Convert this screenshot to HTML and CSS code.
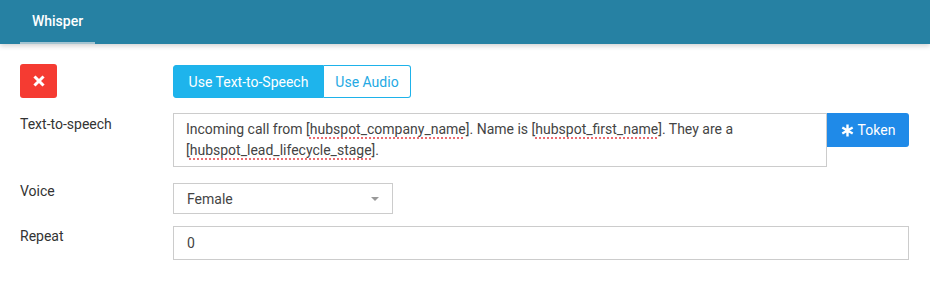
FILE: index.html
```html
<!DOCTYPE html>
<html lang="en">
<head>
    <meta charset="UTF-8">
    <title>Whisper</title>
    <link rel="stylesheet" href="styles.css">
</head>
<body>
    <div class="header">
        <div class="tab">Whisper</div>
    </div>

    <div class="content">
        <div class="row row-top">
            <div class="label">
                <button type="button" class="btn-remove" title="Remove">
                    <svg width="12" height="12" viewBox="0 0 12 12">
                        <path d="M2.5 2.5 L9.5 9.5 M9.5 2.5 L2.5 9.5" stroke="#fff" stroke-width="3" stroke-linecap="square"/>
                    </svg>
                </button>
            </div>
            <div class="btn-group">
                <button type="button" class="seg active">Use Text-to-Speech</button>
                <button type="button" class="seg">Use Audio</button>
            </div>
        </div>

        <div class="row row-tts">
            <div class="label">Text-to-speech</div>
            <div class="tts-wrap">
                <div class="textarea">Incoming call from [<span class="typo">hubspot_company_name</span>]. Name is [<span class="typo">hubspot_first_name</span>]. They are a<br>[<span class="typo">hubspot_lead_lifecycle_stage</span>].</div>
                <button type="button" class="btn-token">
                    <svg width="13" height="13" viewBox="0 0 12 12">
                        <path d="M6 0.5 V11.5 M1.2 3.2 L10.8 8.8 M10.8 3.2 L1.2 8.8" stroke="#fff" stroke-width="2.2"/>
                    </svg>
                    Token
                </button>
            </div>
        </div>

        <div class="row row-voice">
            <div class="label">Voice</div>
            <div class="select">
                <span>Female</span>
                <span class="caret"></span>
            </div>
        </div>

        <div class="row row-repeat">
            <div class="label">Repeat</div>
            <div class="input">0</div>
        </div>
    </div>
</body>
</html>
```

FILE: styles.css
```css
body {
    margin: 0;
    font-family: Roboto, "Liberation Sans", Arial, sans-serif;
    font-size: 14px;
    color: #333;
    background-color: #fff;
}
.header {
    background-color: #2681a3;
    height: 44px;
    padding-left: 20px;
    display: flex;
    box-shadow: 0 2px 5px rgba(0, 0, 0, 0.18);
}
.tab {
    color: #fff;
    font-weight: 500;
    width: 75px;
    text-align: center;
    line-height: 42px;
    border-bottom: 2px solid #a4c4d1;
}
.content {
    padding: 20px 21px 0 20px;
}
.row {
    display: flex;
    align-items: flex-start;
}
.label {
    width: 153px;
    flex-shrink: 0;
    line-height: 20px;
}
.row-tts {
    margin-top: 15px;
}
.row-tts .label {
    padding-top: 1px;
}
.row-voice {
    margin-top: 16px;
}
.row-voice .label {
    margin-top: -2px;
}
.row-repeat {
    margin-top: 12px;
}
.btn-remove {
    width: 37px;
    height: 34px;
    border: none;
    border-radius: 3px;
    background-color: #f53b32;
    display: flex;
    align-items: center;
    justify-content: center;
    padding: 0;
}
.btn-group {
    display: flex;
    margin-top: 1px;
}
.seg {
    height: 33px;
    font-family: inherit;
    font-size: 14px;
    padding: 0;
    border: 1px solid #1eb2ea;
    background-color: #fff;
    color: #25a9e3;
}
.seg:first-child {
    border-radius: 3px 0 0 3px;
    width: 151px;
}
.seg:last-child {
    border-radius: 0 3px 3px 0;
    border-left: none;
    width: 87px;
}
.seg.active {
    background-color: #1eb4ec;
    color: #fff;
}
.tts-wrap {
    display: flex;
    align-items: flex-start;
}
.textarea {
    width: 654px;
    height: 54px;
    box-sizing: border-box;
    border: 1px solid #ccc;
    padding: 5px 12px;
    line-height: 21px;
    color: #444;
}
.typo {
    text-decoration: underline dotted #ec6b70;
    text-decoration-thickness: 2px;
    text-underline-offset: 3px;
}
.btn-token {
    width: 82px;
    height: 34px;
    border: none;
    border-radius: 0 3px 3px 0;
    background-color: #1f8ae8;
    color: #fff;
    font-family: inherit;
    font-size: 14px;
    display: flex;
    align-items: center;
    justify-content: center;
    gap: 4px;
    padding: 0;
}
.select {
    width: 220px;
    height: 31px;
    box-sizing: border-box;
    border: 1px solid #ccc;
    padding: 0 13px;
    display: flex;
    align-items: center;
    justify-content: space-between;
    color: #444;
}
.caret {
    width: 0;
    height: 0;
    border-left: 4px solid transparent;
    border-right: 4px solid transparent;
    border-top: 4px solid #999;
}
.input {
    width: 737px;
    height: 34px;
    box-sizing: border-box;
    border: 1px solid #ccc;
    padding: 0 13px;
    line-height: 32px;
    color: #444;
}
```
